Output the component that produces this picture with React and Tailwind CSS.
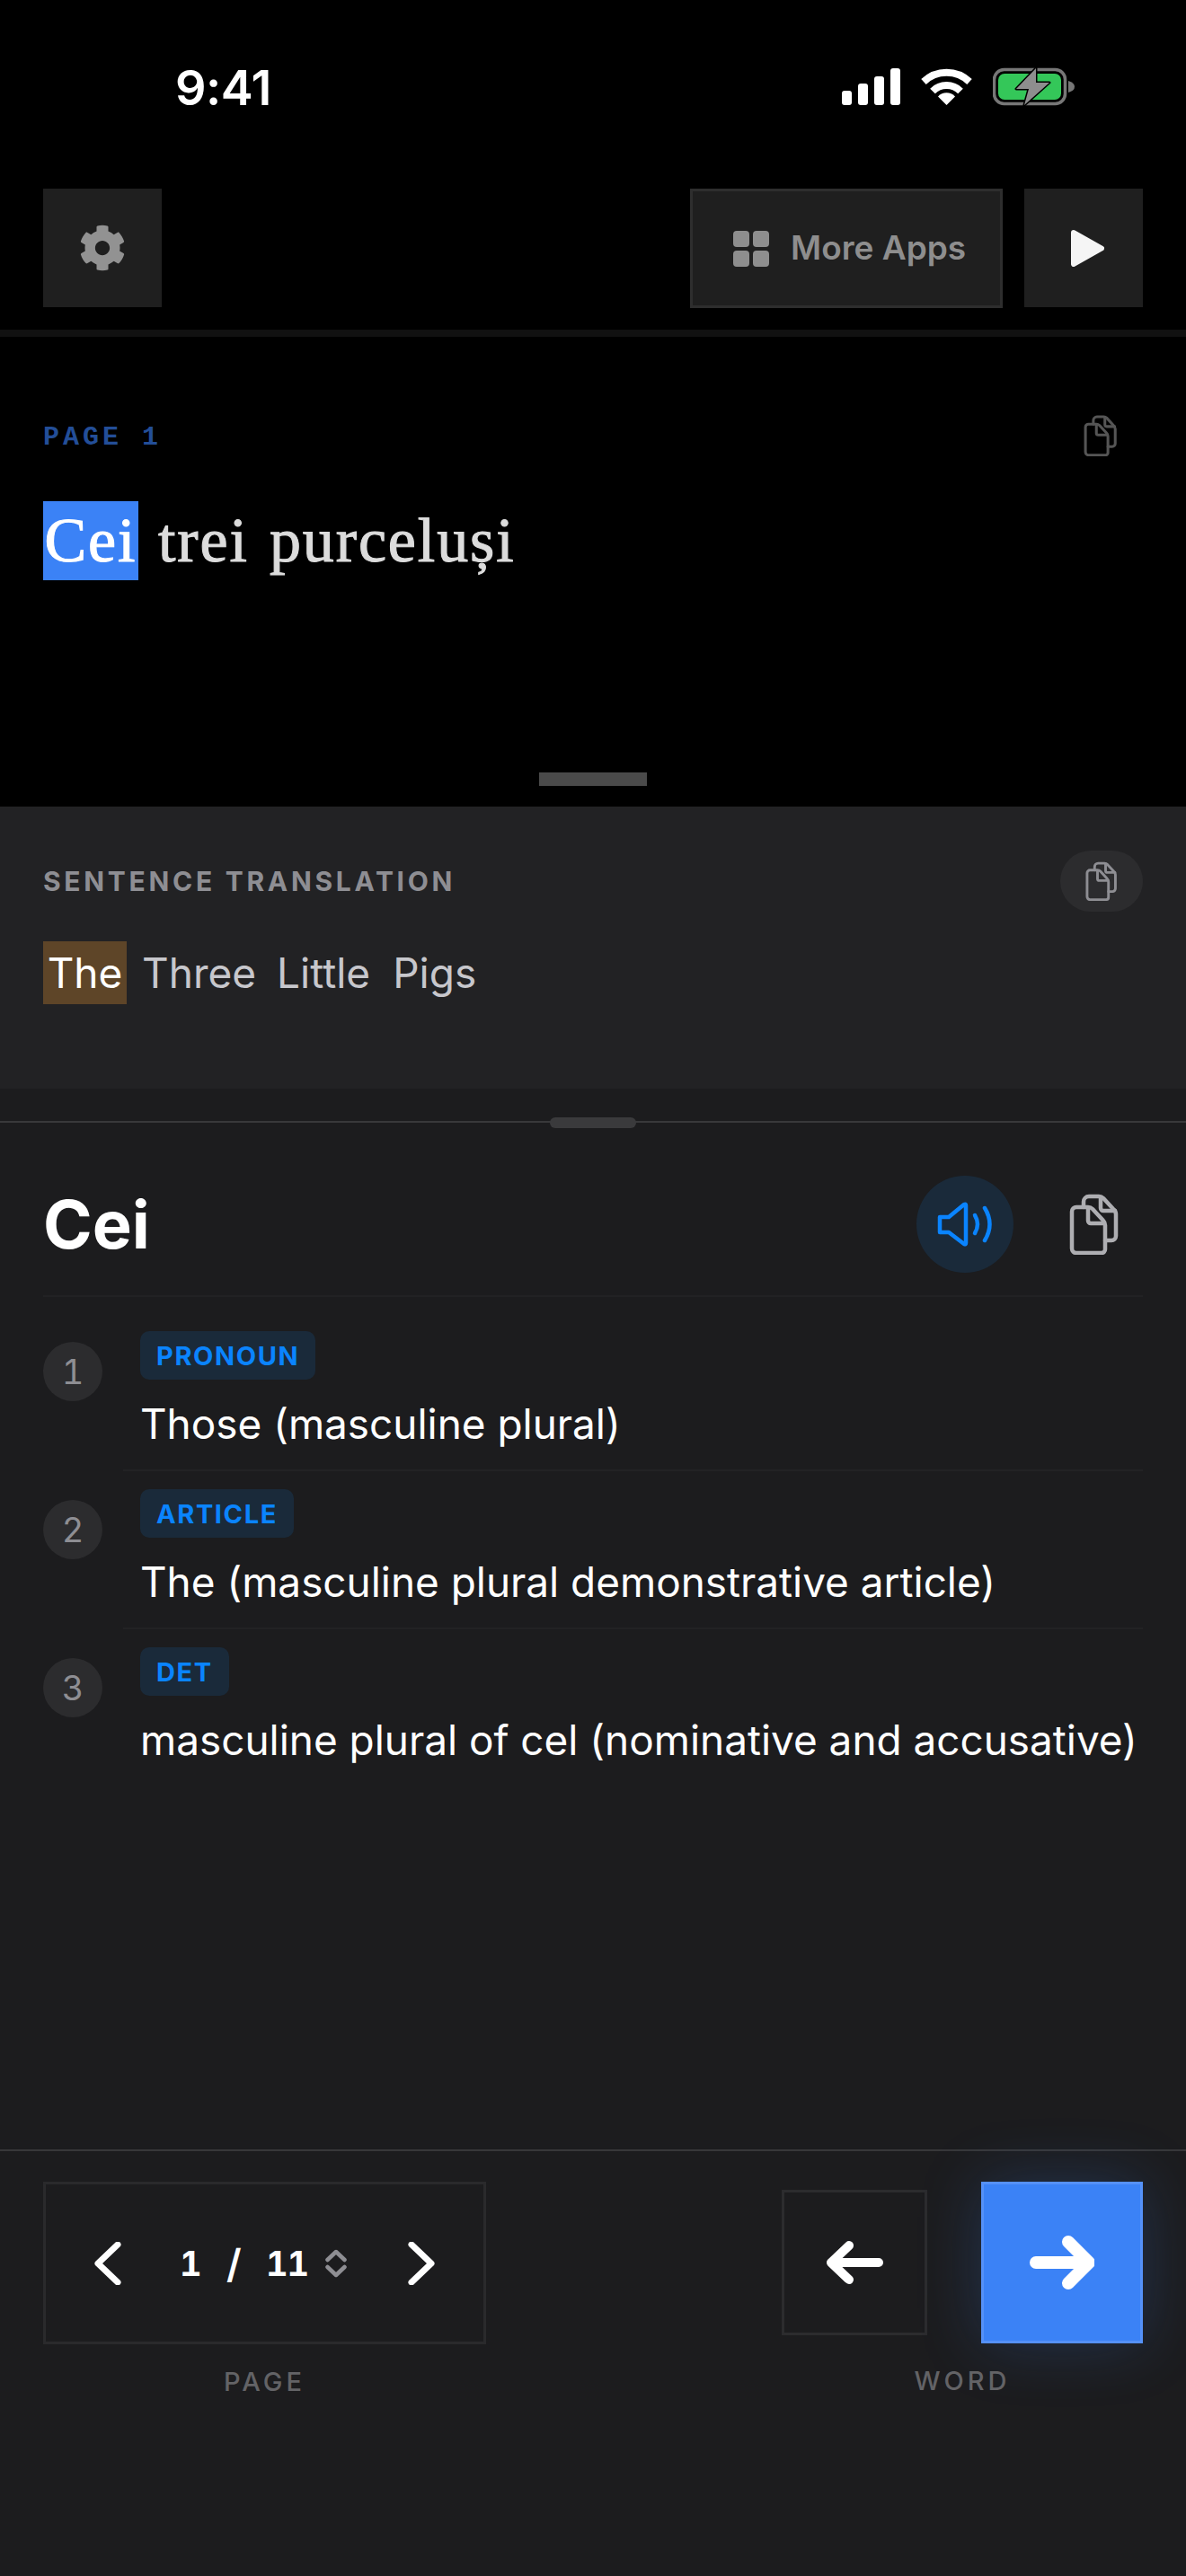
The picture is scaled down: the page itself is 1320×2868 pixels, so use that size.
import { FaCog } from "react-icons/fa";

const ui = "font-['Inter',sans-serif]";

function CopyIcon({ className }) {
  return (
    <svg className={className} viewBox="0 0 56 68" fill="none" stroke="currentColor" strokeWidth="4.500" strokeLinejoin="round" strokeLinecap="round">
      <path d="M16 15V9a6 6 0 0 1 6-6h11q3 0 5 2l11 12q3 2 3 6v24a5 5 0 0 1-5 5h-7" />
      <path d="M35 4v12a3 3 0 0 0 3 3h13" />
      <path d="M8 15h13q3 0 5 2l12 13q2 2 2 5v27a4 4 0 0 1-4 4H8a5 5 0 0 1-5-5V20a5 5 0 0 1 5-5Z" />
      <path d="M21 16v14a3 3 0 0 0 3 3h15" />
    </svg>
  );
}

function SpeakerIcon({ className }) {
  return (
    <svg className={className} viewBox="0 0 64 52" fill="none" stroke="currentColor" strokeWidth="4.500" strokeLinejoin="round" strokeLinecap="round">
      <path d="M4 18h10L31 4q2-1 2 1v42q0 2-2 1L14 35H4Z" />
      <path d="M43 16q6 10 0 20" />
      <path d="M54 8q11 18 0 36" />
    </svg>
  );
}

function StatusBar() {
  return (
    <div className="flex h-[210px] items-start justify-between pl-[195px] pr-[123px] pt-[66px]">
      <span className={`${ui} text-[54px] font-semibold leading-[64px] tracking-[-0.5px] text-white`}>9:41</span>
      <div className="flex items-center pt-[9px]">
        <svg className="h-[41px] w-[65px]" viewBox="0 0 65 41" fill="#fff">
          <rect x="0" y="25" width="11" height="16" rx="3" />
          <rect x="18" y="17" width="11" height="24" rx="3" />
          <rect x="36" y="9" width="11" height="32" rx="3" />
          <rect x="54" y="0" width="11" height="41" rx="3" />
        </svg>
        <svg className="ml-[23px] h-[41px] w-[57px]" viewBox="0 0 57 41" fill="none" stroke="#fff" strokeWidth="8">
          <path d="M3 15A37 37 0 0 1 54 15" />
          <path d="M13 25.500A22 22 0 0 1 44 25.500" />
          <path d="M19 31.500A13 13 0 0 1 38 31.500L28.500 41Z" fill="#fff" stroke="none" />
        </svg>
        <svg className="ml-[23px] h-[43px] w-[92px]" viewBox="0 0 92 43" fill="none">
          <rect x="1.500" y="2.500" width="79" height="38" rx="11" stroke="#777" strokeWidth="3.500" />
          <rect x="6" y="7" width="70" height="29" rx="7" fill="#34c759" />
          <path d="M84 15q7 2 7 6.500t-7 6.500Z" fill="#777" />
          <path d="M48 1 26 24h14l-5 18 28-25H48Z" fill="#8e8e8e" stroke="#000" strokeWidth="3" strokeLinejoin="round" paintOrder="stroke" />
        </svg>
      </div>
    </div>
  );
}

function Toolbar() {
  return (
    <div className="flex h-[157px] items-start justify-between px-12">
      <button className="grid h-[132px] w-[132px] place-items-center bg-[#1f1f1f] text-[#929292]">
        <FaCog className="h-[52px] w-[52px]" />
      </button>
      <div className="flex gap-6">
        <button className="flex h-[133px] w-[348px] items-center gap-6 border-[3px] border-[#2e2e2e] bg-[#1f1f1f] pl-[45px]">
          <svg className="h-[40px] w-[40px]" viewBox="0 0 40 40" fill="#8e8e8e">
            <rect x="0" y="0" width="18" height="18" rx="4" />
            <rect x="22" y="0" width="18" height="18" rx="4" />
            <rect x="0" y="22" width="18" height="18" rx="4" />
            <rect x="22" y="22" width="18" height="18" rx="4" />
          </svg>
          <span className={`${ui} pb-[2px] text-[37px] font-semibold leading-none text-[#8e8e8e]`}>More Apps</span>
        </button>
        <button className="grid h-[132px] w-[132px] place-items-center bg-[#1f1f1f]">
          <svg className="ml-[8px] h-[41px] w-[37px]" viewBox="0 0 37 41" fill="#f5f5f5" stroke="#f5f5f5" strokeWidth="6" strokeLinejoin="round">
            <path d="M3 3 34 20.500 3 38Z" />
          </svg>
        </button>
      </div>
    </div>
  );
}

function ReaderPane() {
  return (
    <section className="relative h-[531px] border-t-[8px] border-[#111] px-12 pt-[87px]">
      <div className="flex h-[46px] items-center justify-between">
        <span className="pt-[3px] font-['Liberation_Mono',monospace] text-[30px] font-bold leading-none tracking-[4px] text-[#234e98]">PAGE 1</span>
        <CopyIcon className="mr-[28px] h-[46px] w-[38px] text-[#555]" />
      </div>
      <div className="mt-[50px] flex h-[88px] items-center font-['Liberation_Serif',serif] text-[70px] leading-none tracking-[1.900px] text-[#dcdcdc] [-webkit-text-stroke:1.1px_currentColor]">
        <span className="flex h-[88px] w-[106px] items-center justify-center bg-[#3b82f6] text-white">Cei</span>
        <span className="ml-[22px]">trei</span>
        <span className="ml-[23px]">purceluși</span>
      </div>
      <div className="absolute left-[600px] top-[485px] h-[15px] w-[120px] bg-[#4a4a4a]" />
    </section>
  );
}

function TranslationPane() {
  return (
    <section className="h-[314px] bg-[#222224] px-12 pt-[49px]">
      <div className="flex h-[68px] items-center justify-between">
        <span className={`${ui} text-[30px] font-bold leading-none tracking-[3.700px] text-[#8e8e93]`}>SENTENCE TRANSLATION</span>
        <span className="grid h-[68px] w-[92px] place-items-center rounded-full bg-[#2c2c2e]">
          <CopyIcon className="h-[44px] w-[36px] text-[#8e8e93]" />
        </span>
      </div>
      <div className={`${ui} mt-[33px] flex h-[70px] items-center text-[46px] leading-none text-[#c7c7cc]`}>
        <span className="flex h-[70px] w-[93px] items-center justify-center bg-[#5e4528] text-white">The</span>
        <span className="ml-[17px]">Three</span>
        <span className="ml-[23px]">Little</span>
        <span className="ml-[25px]">Pigs</span>
      </div>
    </section>
  );
}

const senses = [
  { tag: "PRONOUN", text: "Those (masculine plural)" },
  { tag: "ARTICLE", text: "The (masculine plural demonstrative article)" },
  { tag: "DET", text: "masculine plural of cel (nominative and accusative)" },
];

function SenseRow({ index, tag, text, last }) {
  return (
    <div className="flex">
      <div className="flex w-[89px] shrink-0 items-start pt-[12px]">
        <span className={`${ui} grid h-[66px] w-[66px] place-items-center rounded-full bg-[#2c2c2e] text-[38px] tabular-nums leading-none text-[#8e8e93]`}>
          {index}
        </span>
      </div>
      <div className={`min-w-0 flex-1 pl-[19px] ${last ? "" : "border-b-2 border-[#222224]"}`}>
        <span className={`${ui} inline-flex h-[54px] items-center rounded-[10px] bg-[#1a2a3a] px-[18px] text-[29px] font-bold leading-none tracking-[1.600px] text-[#0a84ff]`}>
          {tag}
        </span>
        <p className={`${ui} mt-[18px] h-[64px] whitespace-nowrap text-[45.900px] leading-[64px] text-white`}>{text}</p>
        <div className={last ? "" : "h-[18px]"} />
      </div>
    </div>
  );
}

function DictionaryPane() {
  return (
    <section className="relative h-[1181px]">
      <div className="h-[38px] border-b-2 border-[#38383a]" />
      <div className="absolute left-[612px] top-[32px] h-[12px] w-[96px] rounded-full bg-[#3a3a3c]" />
      <div className="px-12">
        <div className="flex h-[194px] items-center justify-between border-b-2 border-[#222224] pt-[34px]">
          <h1 className={`${ui} text-[74px] font-bold leading-none text-white`}>Cei</h1>
          <div className="flex items-center">
            <span className="grid h-[108px] w-[108px] place-items-center rounded-full bg-[#1a2a3a]">
              <SpeakerIcon className="h-[52px] w-[64px] text-[#0a84ff]" />
            </span>
            <CopyIcon className="ml-[62px] mr-[26px] h-[68px] w-[56px] text-[#aeaeb2]" />
          </div>
        </div>
        <div className="flex flex-col gap-[20px] pt-[38px]">
          {senses.map((s, i) => (
            <SenseRow key={s.tag} index={i + 1} tag={s.tag} text={s.text} last={i === senses.length - 1} />
          ))}
        </div>
      </div>
    </section>
  );
}

function Chevron({ d, className }) {
  return (
    <svg className={className} viewBox="0 0 30 48" fill="none" stroke="#fff" strokeWidth="7" strokeLinecap="round" strokeLinejoin="round">
      <path d={d} />
    </svg>
  );
}

function BottomBar() {
  return (
    <section className="flex-1 border-t-2 border-[#38383a] px-12 pt-[34px]">
      <div className="flex items-start justify-between">
        <div className="flex w-[493px] flex-col items-center">
          <div className="flex h-[181px] w-full items-center border-[3px] border-[#2a2a2c] pl-[54px]">
            <Chevron d="M26 3 4 24l22 21" className="h-[48px] w-[30px]" />
            <span className={`${ui} ml-[65px] w-[28px] text-[38px] font-bold tabular-nums leading-none text-white`}>1</span>
            <span className={`${ui} ml-[24px] w-[20px] text-[44px] font-semibold leading-none text-white`}>/</span>
            <span className={`${ui} ml-[24px] w-[52px] whitespace-nowrap text-[38px] font-bold tabular-nums leading-none tracking-[-1px] text-white`}>11</span>
            <svg className="ml-[14px] h-[32px] w-[24px]" viewBox="0 0 24 32" fill="none" stroke="#8e8e93" strokeWidth="4.500" strokeLinecap="round" strokeLinejoin="round">
              <path d="M2.500 12 12 3l9.500 9M2.500 20l9.500 9 9.500-9" />
            </svg>
            <Chevron d="M4 3l22 21L4 45" className="ml-[68px] h-[48px] w-[30px]" />
          </div>
          <span className={`${ui} mt-[29px] text-[29px] font-medium leading-[26px] tracking-[4px] text-[#636366]`}>PAGE</span>
        </div>
        <div className="flex w-[402px] flex-col items-center">
          <div className="flex w-full items-center justify-between">
            <button className="grid h-[162px] w-[162px] place-items-center border-[3px] border-[#2c2c2e]">
              <svg className="h-[52px] w-[63px]" viewBox="0 0 63 52" fill="none" stroke="#fff" strokeWidth="10" strokeLinecap="round" strokeLinejoin="round">
                <path d="M58 26H5M25 7 5 26l20 19" />
              </svg>
            </button>
            <button className="grid h-[180px] w-[180px] place-items-center border-[3px] border-[#5591f8] bg-[#3b82f6] shadow-[0_0_70px_rgba(59,130,246,0.22)]">
              <svg className="h-[60px] w-[72px]" viewBox="0 0 72 60" fill="none" stroke="#fff" strokeWidth="14" strokeLinecap="round" strokeLinejoin="round">
                <path d="M7 30h58M43 7l23 23-23 23" />
              </svg>
            </button>
          </div>
          <span className={`${ui} mt-[29px] text-[29px] font-medium leading-[26px] tracking-[4px] text-[#636366]`}>WORD</span>
        </div>
      </div>
    </section>
  );
}

export default function App() {
  return (
    <div className="flex h-[2868px] w-[1320px] flex-col overflow-hidden bg-black">
      <StatusBar />
      <Toolbar />
      <ReaderPane />
      <TranslationPane />
      <div className="flex flex-1 flex-col bg-[#1c1c1e]">
        <DictionaryPane />
        <BottomBar />
      </div>
    </div>
  );
}
